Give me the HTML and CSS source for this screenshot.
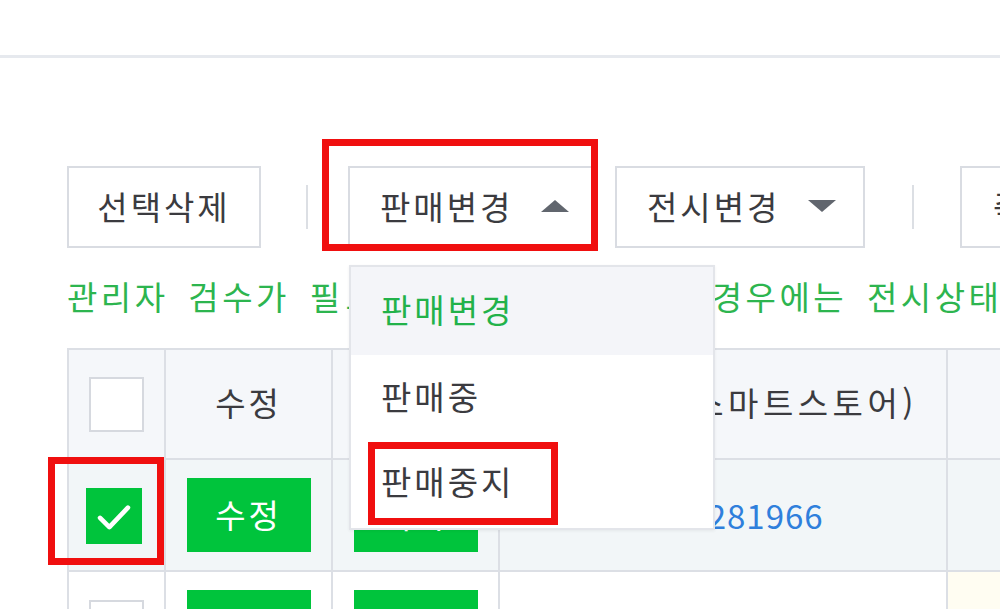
FILE: index.html
```html
<!DOCTYPE html>
<html lang="ko">
<head>
<meta charset="utf-8">
<title>상품 조회/수정</title>
<link rel="stylesheet" href="styles.css">
</head>
<body>
<div class="topbar"></div>
<div class="content">
  <div class="toolbar">
    <button class="btn btn-plain">선택삭제</button>
    <span class="sep"></span>
    <div class="dd dd-open">
      <button class="btn btn-dd">판매변경<span class="tri tri-up"></span></button>
      <ul class="menu">
        <li class="menu-item menu-item-active">판매변경</li>
        <li class="menu-item">판매중</li>
        <li class="menu-item menu-item-marked">판매중지</li>
      </ul>
    </div>
    <div class="dd">
      <button class="btn btn-dd">전시변경<span class="tri tri-down"></span></button>
    </div>
    <span class="sep sep-2"></span>
    <button class="btn btn-plain btn-wide">즉시할인 설정</button>
  </div>
  <p class="notice">관리자 검수가 <span class="notice-mid">필요하거나 판매금지된 </span>경우에는 전시상태를 변경할 수 없습니다.</p>
  <div class="grid">
    <div class="cell head"><span class="check"></span></div>
    <div class="cell head">수정</div>
    <div class="cell head">복사</div>
    <div class="cell head cell-id">상품번호(스마트스토어)</div>
    <div class="cell head"></div>

    <div class="cell sel cell-marked"><span class="check check-on"><svg viewBox="0 0 56 56" width="52" height="52"><polyline points="13,30 23,40 43,19" fill="none" stroke="#fff" stroke-width="5" stroke-linecap="round" stroke-linejoin="round"/></svg></span></div>
    <div class="cell sel"><button class="gbtn">수정</button></div>
    <div class="cell sel"><button class="gbtn">복사</button></div>
    <div class="cell sel"><a class="link">5012281966</a></div>
    <div class="cell sel"></div>

    <div class="cell"><span class="check"></span></div>
    <div class="cell"><button class="gbtn">수정</button></div>
    <div class="cell"><button class="gbtn">복사</button></div>
    <div class="cell"></div>
    <div class="cell cell-warn"></div>
  </div>
</div>
</body>
</html>
```
FILE: styles.css
```css
*, *::before, *::after { box-sizing: border-box; margin: 0; padding: 0; }
html, body { width: 1000px; height: 609px; overflow: hidden; background: #fff; }
body { font-family: "Noto Sans CJK KR", "Noto Sans", sans-serif; color: #3b3b3f; }

.topbar { height: 58px; border-bottom: 3px solid #e6e9ee; }

.content { padding: 108px 0 0 67px; width: 1400px; }

.toolbar { display: flex; align-items: center; height: 82px; white-space: nowrap; }

.btn {
  height: 82px; border: 2px solid #d9dce2; background: #fff;
  font-family: inherit; font-size: 33px; letter-spacing: 3px; color: #3b3b3f;
  display: flex; align-items: center; justify-content: center; flex-shrink: 0;
  padding-bottom: 2px;
}
.btn-plain { width: 194px; }
.btn-wide { width: 250px; justify-content: flex-start; padding-left: 31px; }

.sep { width: 2px; height: 44px; background: #dcdfe4; margin: 0 40px 0 45px; flex-shrink: 0; }
.sep-2 { margin: 0 46px 0 47px; }

.dd { position: relative; width: 250px; flex-shrink: 0; }
.dd + .dd { margin-left: 17px; }
.btn-dd { width: 250px; justify-content: flex-start; padding-left: 30px; gap: 28px; }

.tri { width: 0; height: 0; border-left: 14px solid transparent; border-right: 14px solid transparent; }
.tri-up { border-bottom: 12px solid #61666e; }
.tri-down { border-top: 12px solid #61666e; }

.dd-open::before {
  content: ""; position: absolute; z-index: 3;
  top: -27px; left: -26px; right: 0; bottom: -3px;
  border: 7px solid #f00f0f;
}

.menu {
  position: absolute; z-index: 4; left: 1px; top: 99px; width: 366px;
  list-style: none; background: #fff;
  border: 2px solid #e3e5ea; padding-bottom: 3px;
  box-shadow: 0 1px 3px rgba(0,0,0,0.06);
}
.menu-item {
  position: relative; height: 85px; display: flex; align-items: center;
  padding-left: 30px; padding-bottom: 4px; font-size: 33px; letter-spacing: 3px; color: #3b3b3f;
}
.menu-item-active { background: #f4f5f9; color: #22b24a; height: 88px; }
.menu-item-marked::after {
  content: ""; position: absolute; left: 17px; top: 2px; width: 190px; height: 83px;
  border: 7px solid #f00f0f;
}

.notice {
  margin-top: 28px; height: 40px; line-height: 40px;
  font-size: 33px; letter-spacing: 3.5px; word-spacing: 7px; color: #2db54f; white-space: nowrap;
}
.notice-mid { letter-spacing: 5.5px; }

.grid {
  margin-top: 32px;
  display: grid;
  grid-template-columns: 97px 167px 167px 448px 300px;
  grid-template-rows: 110px 112px 112px;
  border-top: 2px solid #dcdfe5; border-left: 2px solid #dcdfe5;
  width: max-content;
}
.cell {
  position: relative;
  border-right: 2px solid #dcdfe5; border-bottom: 2px solid #dcdfe5;
  display: flex; align-items: center; justify-content: center;
  font-size: 33px; letter-spacing: 3px; color: #3b3b3f; white-space: nowrap;
  background: #fff;
}
.head { background: #f5f7fa; padding-bottom: 4px; }
.cell-id { justify-content: flex-end; padding-right: 28px; letter-spacing: 4.5px; }
.sel { background: #f2f6f8; }
.cell-warn { background: #fffdf2; }

.check {
  width: 55px; height: 55px; background: #fff; border: 2px solid #d6d9df;
  display: flex; align-items: center; justify-content: center;
}
.head .check { margin-top: 4px; }
.check-on { width: 56px; height: 56px; background: #00c43c; border: 0; margin-right: 5px; margin-top: 2px; }

.cell-marked::after {
  content: ""; position: absolute; z-index: 2;
  left: -21px; top: -3px; width: 116px; height: 108px;
  border: 7px solid #f00f0f;
}

.gbtn {
  width: 124px; height: 74px; border: 0; background: #00c43c; color: #fff;
  font-family: inherit; font-size: 33px; letter-spacing: 3px; padding-bottom: 2px;
}

.link { color: #2f7fdc; font-size: 33px; letter-spacing: 1px; margin-left: 8px; }
```
